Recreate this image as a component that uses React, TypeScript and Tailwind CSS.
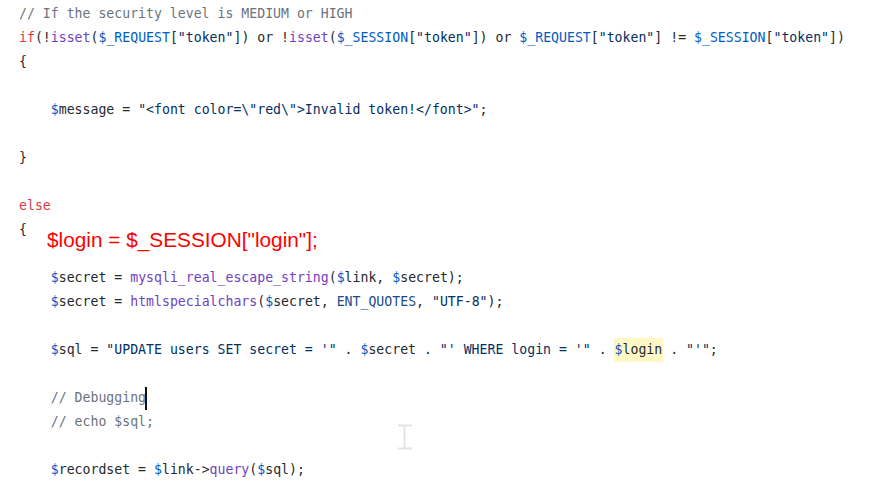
import React from "react";

type Tok = [string, string];

const C: Record<string, string> = {
  p: "text-[#24292e]",
  c: "text-[#6a737d]",
  k: "text-[#d73a49]",
  f: "text-[#6f42c1]",
  v: "text-[#005cc5]",
  s: "text-[#032f62]",
  n: "text-[#1c4a8a]",
};

function Line({ toks, children }: { toks?: Tok[]; children?: React.ReactNode }) {
  return (
    <div className="h-[24px] leading-[24px] whitespace-pre">
      {toks?.map(([t, s], i) => (
        <span key={i} className={C[t]}>
          {s}
        </span>
      ))}
      {children}
    </div>
  );
}

export default function App() {
  return (
    <div className="relative w-[872px] h-[491px] bg-white overflow-hidden">
      <div
        className="pl-[19px] pt-[2px] text-[13.2px]"
        style={{ fontFamily: '"DejaVu Sans Mono", "Liberation Mono", monospace' }}
      >
        <Line toks={[["c", "// If the security level is MEDIUM or HIGH"]]} />
        <Line
          toks={[
            ["k", "if"],
            ["p", "(!"],
            ["f", "isset"],
            ["p", "("],
            ["v", "$_REQUEST"],
            ["p", "["],
            ["s", '"token"'],
            ["p", "]) or !"],
            ["f", "isset"],
            ["p", "("],
            ["v", "$_SESSION"],
            ["p", "["],
            ["s", '"token"'],
            ["p", "]) or "],
            ["v", "$_REQUEST"],
            ["p", "["],
            ["s", '"token"'],
            ["p", "] != "],
            ["v", "$_SESSION"],
            ["p", "["],
            ["s", '"token"'],
            ["p", "])"],
          ]}
        />
        <Line toks={[["p", "{"]]} />
        <Line />
        <Line
          toks={[
            ["p", "    "],
            ["v", "$"],
            ["p", "message = "],
            ["s", '"<font color=\\"red\\">Invalid token!</font>"'],
            ["p", ";"],
          ]}
        />
        <Line />
        <Line toks={[["p", "}"]]} />
        <Line />
        <Line toks={[["k", "else"]]} />
        <div className="h-[48px] flex items-start">
          <span className="leading-[24px] text-[#24292e]">{"{"}</span>
          <span
            className="ml-[20px] mt-[10px] leading-[24px] text-[20.8px] text-[#ff0000] whitespace-pre"
            style={{ fontFamily: '"Liberation Sans", Arial, sans-serif' }}
          >
            {'$login = $_SESSION["login"];'}
          </span>
        </div>
        <Line
          toks={[
            ["p", "    "],
            ["v", "$"],
            ["p", "secret = "],
            ["f", "mysqli_real_escape_string"],
            ["p", "("],
            ["v", "$"],
            ["p", "link, "],
            ["v", "$"],
            ["p", "secret);"],
          ]}
        />
        <Line
          toks={[
            ["p", "    "],
            ["v", "$"],
            ["p", "secret = "],
            ["f", "htmlspecialchars"],
            ["p", "("],
            ["v", "$"],
            ["p", "secret, "],
            ["n", "ENT_QUOTES"],
            ["p", ", "],
            ["s", '"UTF-8"'],
            ["p", ");"],
          ]}
        />
        <Line />
        <Line
          toks={[
            ["p", "    "],
            ["v", "$"],
            ["p", "sql = "],
            ["s", "\"UPDATE users SET secret = '\""],
            ["p", " . "],
            ["v", "$"],
            ["p", "secret . "],
            ["s", "\"' WHERE login = '\""],
            ["p", " . "],
          ]}
        >
          <span className="bg-[#fff8c5] inline-block h-[24px] px-[1px] mx-[-1px]">
            <span className={C.v}>$</span>
            <span className={C.p}>login</span>
          </span>
          <span className={C.p}> . </span>
          <span className={C.s}>"'"</span>
          <span className={C.p}>;</span>
        </Line>
        <Line />
        <Line toks={[["p", "    "], ["c", "// Debugging"]]}>
          <span className="inline-block w-[2px] h-[23px] bg-[#111] align-middle ml-[-1px]" />
        </Line>
        <Line toks={[["p", "    "], ["c", "// echo $sql;"]]} />
        <Line />
        <Line
          toks={[
            ["p", "    "],
            ["v", "$"],
            ["p", "recordset = "],
            ["v", "$"],
            ["p", "link->"],
            ["f", "query"],
            ["p", "("],
            ["v", "$"],
            ["p", "sql);"],
          ]}
        />
      </div>
      <svg
        className="absolute left-[397px] top-[424px]"
        width="16"
        height="26"
        viewBox="0 0 16 26"
      >
        <path d="M1 1.5h14M1 24.5h14M7.5 1.5v23" stroke="#e4e4e4" strokeWidth="2" fill="none" />
      </svg>
    </div>
  );
}
